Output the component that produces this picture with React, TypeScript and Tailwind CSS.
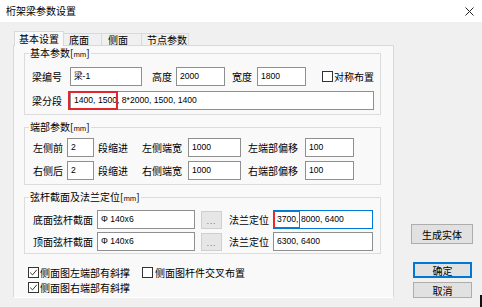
import React from 'react';

const CJK = "font-['Noto_Sans_CJK_SC',sans-serif]";
const NUM = "font-['Liberation_Sans','Noto_Sans_CJK_SC',sans-serif]";

function Field({ width, value, focused, mark }: { width: string; value: string; focused?: boolean; mark?: 'wide' | 'thin' }) {
  return (
    <div
      className={`relative h-[19px] shrink-0 border bg-white pl-[3px] pt-[3px] text-[8.6px] leading-[11px] text-black whitespace-nowrap ${NUM} ${width} ${
        focused ? 'border-[#0078d7]' : 'border-[#8f8f8f]'
      }`}
    >
      {value}
      {mark === 'wide' && (
        <div className="absolute -left-[3px] -top-[1px] h-[19px] w-[50px] border-2 border-[#e3262b]" />
      )}
      {mark === 'thin' && (
        <div className="absolute left-0 top-0 h-[17px] w-[26px] border border-[#ee2a2a]" />
      )}
    </div>
  );
}

function Label({ width, text, className = '' }: { width: string; text: string; className?: string }) {
  return <span className={`shrink-0 whitespace-nowrap text-[10px] leading-[14px] ${width} ${className}`}>{text}</span>;
}

function Check({ checked }: { checked?: boolean }) {
  return (
    <span className="flex h-[11px] w-[11px] shrink-0 items-center justify-center border border-[#333] bg-white">
      {checked && (
        <svg width="9" height="9" viewBox="0 0 9 9">
          <path d="M1.2 4.6 L3.5 6.9 L7.8 1.8" fill="none" stroke="#333" strokeWidth="1" />
        </svg>
      )}
    </span>
  );
}

function Group({ title, className = '', children }: { title: string; className?: string; children: React.ReactNode }) {
  return (
    <div className={`w-[357px] border border-[#dcdcdc] ${className}`}>
      <div className="-mt-[7px] ml-[4px] h-[12px] w-fit bg-[#f9f9f9] px-[1px] text-[10px] leading-[12px]">
        {title}[<span className="text-[7px]">mm</span>]
      </div>
      <div className="h-[1px]" />
      {children}
    </div>
  );
}

function Btn({ text, width, height, primary }: { text: string; width: string; height: string; primary?: boolean }) {
  return (
    <div
      className={`flex items-center justify-center bg-[#e1e1e1] text-[10px] ${width} ${height} ${
        primary ? 'border-2 border-[#0078d7]' : 'border border-[#adadad]'
      }`}
    >
      {text}
    </div>
  );
}

export default function App() {
  return (
    <div className={`relative flex h-[307px] w-[482px] flex-col overflow-hidden bg-[#f0f0f0] text-black ${CJK}`}>
      <div className="flex h-[22px] shrink-0 items-center justify-between bg-white pl-[6px] pr-[8px]">
        <span className="text-[10px] leading-[14px]">桁架梁参数设置</span>
        <svg width="9" height="9" viewBox="0 0 9 9">
          <path d="M0.5 0.5 L8.5 8.5 M8.5 0.5 L0.5 8.5" stroke="#222" strokeWidth="1" />
        </svg>
      </div>

      <div className="flex flex-1">
        <div className="ml-[13px] mt-[9px] flex flex-col">
          <div className="flex items-end text-[10px] leading-[12px]">
            <div className="relative z-10 -mb-px ml-px h-[15px] w-[50px] border-x border-t border-[#d9d9d9] bg-[#f9f9f9] pl-[4px] pt-[1px]">
              基本设置
            </div>
            <div className="h-[12px] w-[38px] border-r border-t border-[#d9d9d9] bg-[#f0f0f0] pl-[5px]">底面</div>
            <div className="h-[12px] w-[40px] border-r border-t border-[#d9d9d9] bg-[#f0f0f0] pl-[6px]">侧面</div>
            <div className="h-[12px] w-[47px] border-r border-t border-[#d9d9d9] bg-[#f0f0f0] pl-[5px]">节点参数</div>
          </div>

          <div className="h-[253px] w-[381px] border-x border-t border-b border-[#d9d9d9] border-b-white bg-[#f9f9f9] pl-[10px] pt-[7px]">
            <Group title="基本参数">
              <div className="flex flex-col gap-[5px] pb-[4px] pl-[7px] pt-[7px]">
                <div className="flex h-[19px] items-center">
                  <Label width="w-[38px]" text="梁编号" />
                  <Field width="w-[72px]" value="梁-1" />
                  <Label width="w-[24px]" text="高度" className="ml-[10px]" />
                  <Field width="w-[49px]" value="2000" />
                  <Label width="w-[25px]" text="宽度" className="ml-[7px]" />
                  <Field width="w-[49px]" value="1800" />
                  <span className="ml-[16px] flex items-center gap-[1px]">
                    <Check />
                    <Label width="w-auto" text="对称布置" />
                  </span>
                </div>
                <div className="flex h-[19px] items-center">
                  <Label width="w-[38px]" text="梁分段" />
                  <Field width="w-[304px]" value="1400, 1500, 8*2000, 1500, 1400" mark="wide" />
                </div>
              </div>
            </Group>

            <Group title="端部参数" className="mt-[12px]">
              <div className="flex flex-col gap-[4px] pb-[4px] pl-[8px] pt-[4px]">
                {[
                  ['左侧前', '左侧端宽', '左端部偏移'],
                  ['右侧后', '右侧端宽', '右端部偏移'],
                ].map(([a, b, c]) => (
                  <div key={a} className="flex h-[19px] items-center">
                    <Label width="w-[34px]" text={a} />
                    <Field width="w-[27px]" value="2" />
                    <Label width="w-[44px]" text="段缩进" className="ml-[4px]" />
                    <Label width="w-[46px]" text={b} />
                    <Field width="w-[53px]" value="1000" />
                    <Label width="w-[57px]" text={c} className="ml-[7px]" />
                    <Field width="w-[49px]" value="100" />
                  </div>
                ))}
              </div>
            </Group>

            <Group title="弦杆截面及法兰定位" className="mt-[12px]">
              <div className="flex flex-col gap-[3px] pb-[2px] pl-[8px] pt-[6px]">
                {[
                  ['底面弦杆截面', '3700, 8000, 6400', true],
                  ['顶面弦杆截面', '6300, 6400', false],
                ].map(([a, v, f]) => (
                  <div key={a as string} className="flex h-[19px] items-center">
                    <Label width="w-[64px]" text={a as string} />
                    <Field width="w-[98px]" value="Φ 140x6" />
                    <div className="ml-[6px] flex h-[18px] w-[21px] items-end justify-center border border-[#cfcfcf] bg-[#e6e6e6] pb-[3px] text-[8px] leading-[8px] tracking-[1px] text-[#777]">
                      ...
                    </div>
                    <Label width="w-[44px]" text="法兰定位" className="ml-[7px]" />
                    <Field width="w-[100px]" value={v as string} focused={f as boolean} mark={f ? 'thin' : undefined} />
                  </div>
                ))}
              </div>
            </Group>

            <div className="ml-[4px] mt-[11px] flex flex-col">
              <div className="flex h-[15px] items-center">
                <span className="flex items-center gap-[1px]">
                  <Check checked />
                  <Label width="w-auto" text="侧面图左端部有斜撑" />
                </span>
                <span className="ml-[12px] flex items-center gap-[2px]">
                  <Check />
                  <Label width="w-auto" text="侧面图杆件交叉布置" />
                </span>
              </div>
              <div className="flex h-[15px] items-center">
                <span className="flex items-center gap-[1px]">
                  <Check checked />
                  <Label width="w-auto" text="侧面图右端部有斜撑" />
                </span>
              </div>
            </div>
          </div>
        </div>

        <div className="ml-[17px] flex flex-col pt-[202px]">
          <Btn text="生成实体" width="w-[62px]" height="h-[20px]" />
          <div className="ml-[2px] mt-[18px] flex flex-col gap-[4px]">
            <Btn text="确定" width="w-[59px]" height="h-[16px]" primary />
            <Btn text="取消" width="w-[59px]" height="h-[16px]" />
          </div>
        </div>
      </div>

      <div className="absolute bottom-0 right-0 h-[12px] w-[2px] bg-[#111]" />
    </div>
  );
}
